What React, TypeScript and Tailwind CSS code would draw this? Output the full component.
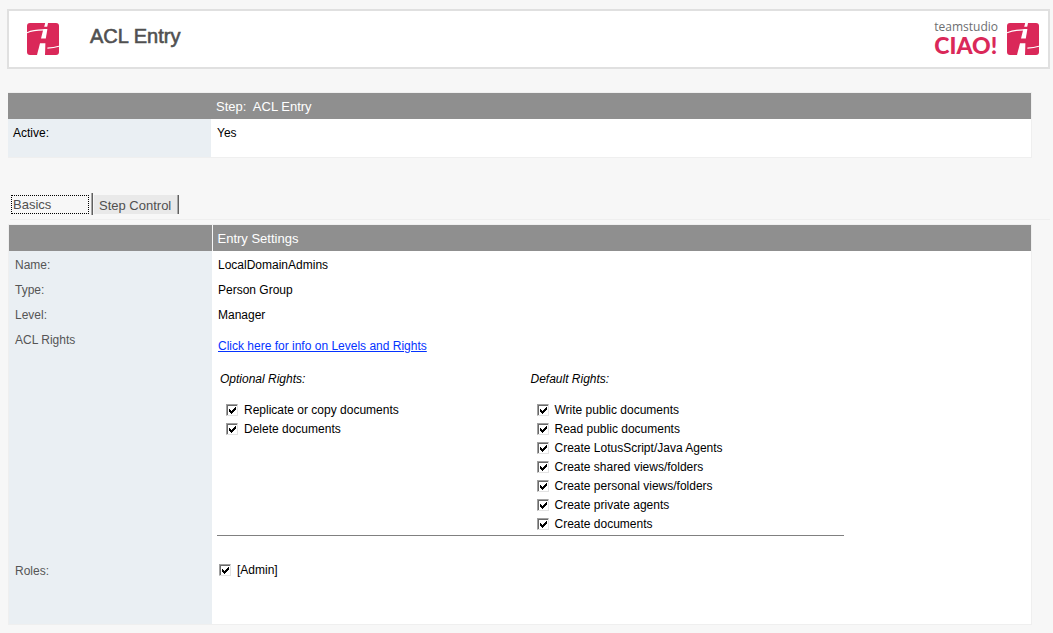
import { useState } from "react";
import type { ReactNode } from "react";

const optionalRights = ["Replicate or copy documents", "Delete documents"];

const defaultRights = [
  "Write public documents",
  "Read public documents",
  "Create LotusScript/Java Agents",
  "Create shared views/folders",
  "Create personal views/folders",
  "Create private agents",
  "Create documents",
];

function CiaoMark() {
  return (
    <svg viewBox="0 0 32 32" className="size-8 shrink-0" aria-hidden="true">
      <rect width="32" height="32" rx="3" fill="#da2859" />
      <path d="M18.2 0H21L20.2 3.8H17.2Z" fill="#fff" />
      <path d="M16.4 6H20.4L18.8 15.4H14Z" fill="#fff" />
      <path d="M13 20.2H18.4L18 32H10Z" fill="#fff" />
      <path d="M0 9.8C4 7.8 9 6.9 16.6 6.9" fill="none" stroke="#fff" strokeWidth="1.1" />
      <path d="M20.4 25.1C25 25 28.5 24.4 32 23.2" fill="none" stroke="#fff" strokeWidth="1.1" />
    </svg>
  );
}

function Check({ label }: { label: string }) {
  const [checked, setChecked] = useState(true);
  return (
    <label className="flex h-[19px] items-center gap-[6px]">
      <span className="grid size-3 shrink-0">
        <input
          type="checkbox"
          checked={checked}
          onChange={() => setChecked(!checked)}
          className="peer col-start-1 row-start-1 size-3 appearance-none border border-t-[#a0a0a0] border-r-[#e3e3e3] border-b-[#e3e3e3] border-l-[#a0a0a0] bg-white shadow-[inset_1px_1px_0_#696969]"
        />
        <svg
          viewBox="0 0 12 12"
          shapeRendering="crispEdges"
          className="pointer-events-none invisible col-start-1 row-start-1 size-3 peer-checked:visible"
          aria-hidden="true"
        >
          <path
            d="M3 5h1v3h-1zM4 6h1v3h-1zM5 7h1v3h-1zM6 6h1v3h-1zM7 5h1v3h-1zM8 4h1v3h-1zM9 3h1v3h-1z"
            fill="#000"
          />
        </svg>
      </span>
      {label}
    </label>
  );
}

function Row({ label, children }: { label: string; children: ReactNode }) {
  return (
    <tr className="h-[25px] align-top">
      <th scope="row" className="bg-[#eaeff3] pt-[6px] pl-[6px] text-left font-normal text-[#555]">
        {label}
      </th>
      <td className="bg-white pt-[6px] pl-[6px]">{children}</td>
    </tr>
  );
}

export default function App() {
  const [tab, setTab] = useState("basics");
  return (
    <div className="min-h-screen bg-[#f7f7f7] pt-[9px] pr-[3px] pb-2 pl-[7px] font-['Liberation_Sans',Arial,sans-serif] text-[12px] leading-4 text-black">
      <header className="flex h-[60px] items-center border-2 border-[#e0e0e0] bg-white pr-[9px] pl-[18px]">
        <CiaoMark />
        <h1 className="ml-[31px] pb-[6px] text-[20px] leading-6 text-[#505050] [-webkit-text-stroke:0.6px_#505050]">
          ACL Entry
        </h1>
        <div className="ml-auto flex items-center gap-[9px]">
          <div className="flex flex-col pb-1">
            <span className="font-['Open_Sans','Noto_Sans',sans-serif] text-[12px] leading-4 font-medium text-[#6d6e70]">
              teamstudio
            </span>
            <span className="font-['Lato',sans-serif] text-[23px] leading-5 font-black text-[#da2859]">CIAO!</span>
          </div>
          <CiaoMark />
        </div>
      </header>

      <main>
        <div className="mt-[23px] mr-[18px] border border-l-0 border-[#efefef] ml-px">
          <table className="w-full table-fixed border-collapse">
            <colgroup>
              <col className="w-[203px]" />
              <col />
            </colgroup>
            <thead>
              <tr className="h-[26px] bg-[#8f8f8f] text-[13px] text-white">
                <td />
                <th className="pt-[2px] pl-[5px] text-left font-normal whitespace-pre">Step:  ACL Entry</th>
              </tr>
            </thead>
            <tbody>
              <tr className="h-[38px] align-top">
                <th scope="row" className="bg-[#eaeff3] pt-[6px] pl-[5px] text-left font-normal">
                  Active:
                </th>
                <td className="bg-white pt-[6px] pl-[6px]">Yes</td>
              </tr>
            </tbody>
          </table>
        </div>

        <div role="tablist" className="mt-[35px] ml-[3px] flex h-[27px] items-start border-b border-[#efefef] pl-px text-[13px] leading-4 text-[#505050]">
          <button
            type="button"
            role="tab"
            aria-selected={tab === "basics"}
            onClick={() => setTab("basics")}
            className="mt-[2px] h-[19px] w-[78px] border border-dotted border-black pl-px text-left outline-none"
          >
            Basics
          </button>
          <span className="ml-[2px] h-[22px] w-[2px] border-r border-l border-r-[#606060] border-l-[#a8a8a8]" />
          <button
            type="button"
            role="tab"
            aria-selected={tab === "control"}
            onClick={() => setTab("control")}
            className="mt-[2px] ml-px h-[19px] w-[83px] bg-[#e9e9e9] pt-[2px] pl-[5px] text-left whitespace-nowrap outline-none"
          >
            Step Control
          </button>
          <span className="mt-[2px] h-[19px] w-[2px] border-r border-l border-r-[#606060] border-l-[#a8a8a8]" />
        </div>

        <div className="mt-1 mr-[18px] ml-px border border-[#efefef]">
          <table className="w-full table-fixed border-collapse">
            <colgroup>
              <col className="w-[203px]" />
              <col />
            </colgroup>
            <thead>
              <tr className="h-[26px] bg-[#8f8f8f] text-[13px] text-white">
                <td className="border-r border-[#f7f7f7]" />
                <th className="pt-[2px] pl-[5px] text-left font-normal">Entry Settings</th>
              </tr>
            </thead>
            <tbody>
              <Row label="Name:">LocalDomainAdmins</Row>
              <Row label="Type:">Person Group</Row>
              <Row label="Level:">Manager</Row>
              <Row label="ACL Rights">
                <div className="mt-[6px]">
                  <a href="#levels" className="text-[#0433ff] underline">
                    Click here for info on Levels and Rights
                  </a>
                </div>
                <div className="mt-[17px] -ml-px flex max-w-[627px] border-b border-[#808080] pb-[2px]">
                  <div className="w-1/2 pl-[3px]">
                    <p className="italic">Optional Rights:</p>
                    <div className="mt-[13px] pl-[6px]">
                      {optionalRights.map((right) => (
                        <Check key={right} label={right} />
                      ))}
                    </div>
                  </div>
                  <div className="w-1/2">
                    <p className="italic">Default Rights:</p>
                    <div className="mt-[13px] pl-[6px]">
                      {defaultRights.map((right) => (
                        <Check key={right} label={right} />
                      ))}
                    </div>
                  </div>
                </div>
                <div className="h-[21px]" />
              </Row>
              <Row label="Roles:">
                <div className="-mt-[3px] h-[64px] pl-px">
                  <Check label="[Admin]" />
                </div>
              </Row>
            </tbody>
          </table>
        </div>
      </main>
    </div>
  );
}
